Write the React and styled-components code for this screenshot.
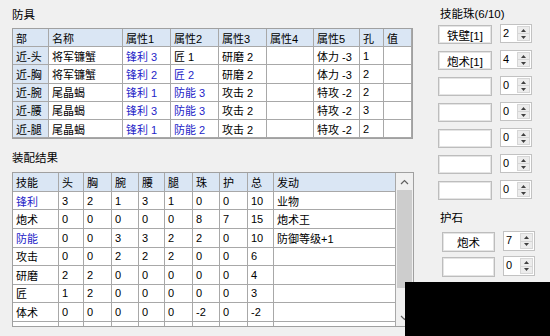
import styled, { createGlobalStyle } from 'styled-components';

const GlobalStyle = createGlobalStyle`
  html, body {
    margin: 0;
    padding: 0;
  }
  body {
    background: #f0f0f0;
    font-family: "Liberation Sans", "Noto Sans CJK SC", sans-serif;
    font-size: 11px;
    color: #000;
  }
`;

const Window = styled.div`
  position: relative;
  width: 550px;
  height: 336px;
  overflow: hidden;
  background: #f0f0f0;
  display: grid;
  grid-template-columns: 426px 1fr;
`;

const LeftPane = styled.div`
  padding: 8px 0 0 12px;
  display: flex;
  flex-direction: column;
`;

const RightPane = styled.div`
  padding: 7px 0 0 12px;
  display: flex;
  flex-direction: column;
`;

const GroupLabel = styled.div`
  font-size: 11.5px;
  line-height: 14px;
  height: 14px;
  padding-left: ${p => p.$indent || 0}px;
  margin: ${p => p.$top || 0}px 0 ${p => p.$bottom || 0}px;
  white-space: nowrap;
`;

const Table = styled.div`
  display: grid;
  grid-template-columns: ${p => p.$cols};
  grid-auto-rows: ${p => p.$row}px;
  background: #fff;
`;

const ArmorFrame = styled.div`
  width: 401px;
  box-sizing: border-box;
  border: 1px solid #a0a0a0;
`;

const Cell = styled.div`
  box-sizing: border-box;
  border-right: 1px solid #a8a8a8;
  border-bottom: 1px solid #a8a8a8;
  padding-left: 3px;
  display: flex;
  align-items: center;
  white-space: nowrap;
  overflow: hidden;
  background: ${p => (p.$head ? '#dae6f4' : '#fff')};
  color: ${p => (p.$blue ? '#2424c8' : '#000')};
`;

const ListBox = styled.div`
  width: 402px;
  height: 155px;
  box-sizing: border-box;
  border: 1px solid #a0a0a0;
  display: flex;
  background: #fff;
`;

const ListBody = styled.div`
  flex: 1;
  overflow: hidden;
`;

const ScrollBar = styled.div`
  width: 17px;
  display: flex;
  flex-direction: column;
  background: #f0f0f0;
`;

const ScrollButton = styled.div`
  height: 17px;
  display: flex;
  align-items: center;
  justify-content: center;
  color: #606060;
`;

const ScrollThumb = styled.div`
  height: 98px;
  margin: 0 1px;
  background: #cdcdcd;
`;

const ScrollTrack = styled.div`
  flex: 1;
`;

const SlotList = styled.div`
  display: flex;
  flex-direction: column;
  gap: ${p => p.$gap}px;
  padding-left: ${p => p.$indent || 0}px;
`;

const SlotRow = styled.div`
  display: flex;
  align-items: flex-start;
  gap: 8px;
  height: ${p => p.$h}px;
`;

const SkillBox = styled.div`
  width: ${p => p.$w}px;
  height: ${p => p.$h}px;
  box-sizing: border-box;
  border: 1px solid #bdbdbd;
  box-shadow: inset 0 0 0 1px #e4e4e4;
  background: #fff;
  display: flex;
  align-items: center;
  justify-content: center;
  white-space: nowrap;
  font-size: 11.5px;
`;

const Spinner = styled.div`
  width: 32px;
  height: ${p => p.$h}px;
  margin-top: -1px;
  box-sizing: border-box;
  border: 1px solid #c2c2c2;
  background: #fff;
  display: flex;
`;

const SpinValue = styled.div`
  flex: 1;
  padding: 2px 0 0 2px;
  line-height: 12px;
`;

const SpinButtons = styled.div`
  width: 13px;
  margin: 1px 1px 1px 0;
  display: flex;
  flex-direction: column;
  border: 1px solid #d6d6d6;
  box-sizing: border-box;
`;

const SpinArrow = styled.div`
  flex: 1;
  display: flex;
  align-items: center;
  justify-content: center;
  background: #ececec;
  & + & {
    border-top: 1px solid #d6d6d6;
  }
`;

const Blackout = styled.div`
  position: absolute;
  left: 405px;
  top: 282px;
  width: 145px;
  height: 54px;
  background: #000;
`;

const ARMOR_COLS = '36px 74px 48px 48px 48px 47px 46px 24px 28px';
const ARMOR_HEAD = ['部', '名称', '属性1', '属性2', '属性3', '属性4', '属性5', '孔', '值'];
const ARMOR = [
  ['近-头', '将军镰蟹', '锋利 3', '匠 1', '研磨 2', '', '体力 -3', '1', ''],
  ['近-胸', '将军镰蟹', '锋利 2', '匠 2', '研磨 2', '', '体力 -3', '2', ''],
  ['近-腕', '尾晶蝎', '锋利 1', '防能 3', '攻击 2', '', '特攻 -2', '2', ''],
  ['近-腰', '尾晶蝎', '锋利 3', '防能 3', '攻击 2', '', '特攻 -2', '3', ''],
  ['近-腿', '尾晶蝎', '锋利 1', '防能 2', '攻击 2', '', '特攻 -2', '2', ''],
];

const RESULT_COLS = '46px 25px 28px 27px 26px 28px 27px 28px 26px 122px';
const RESULT_HEAD = ['技能', '头', '胸', '腕', '腰', '腿', '珠', '护', '总', '发动'];
const RESULT = [
  ['锋利', '3', '2', '1', '3', '1', '0', '0', '10', '业物'],
  ['炮术', '0', '0', '0', '0', '0', '8', '7', '15', '炮术王'],
  ['防能', '0', '0', '3', '3', '2', '2', '0', '10', '防御等级+1'],
  ['攻击', '0', '0', '2', '2', '2', '0', '0', '6', ''],
  ['研磨', '2', '2', '0', '0', '0', '0', '0', '4', ''],
  ['匠', '1', '2', '0', '0', '0', '0', '0', '3', ''],
  ['体术', '0', '0', '0', '0', '0', '-2', '0', '-2', ''],
  ['体力', '-3', '-3', '0', '0', '0', '0', '0', '-6', ''],
];

const isBlue = text => text.startsWith('锋利') || text.startsWith('防能') || text === '匠 2';

const JEWELS = [
  ['铁壁[1]', '2'],
  ['炮术[1]', '4'],
  ['', '0'],
  ['', '0'],
  ['', '0'],
  ['', '0'],
  ['', '0'],
];

const STONES = [
  ['炮术', '7'],
  ['', '0'],
];

function Chevron({ down }) {
  return (
    <svg width="9" height="6" viewBox="0 0 9 6">
      <polyline
        points={down ? '1,1 4.5,4.5 8,1' : '1,5 4.5,1.5 8,5'}
        fill="none"
        stroke="currentColor"
        strokeWidth="1.2"
      />
    </svg>
  );
}

function Triangle({ down }) {
  return (
    <svg width="5" height="3" viewBox="0 0 5 3">
      <polygon points={down ? '0,0 5,0 2.5,3' : '0,3 5,3 2.5,0'} fill="#404040" />
    </svg>
  );
}

function Slot({ label, value, w, h }) {
  return (
    <SlotRow $h={h}>
      <SkillBox $w={w} $h={h}>{label}</SkillBox>
      <Spinner $h={h}>
        <SpinValue>{value}</SpinValue>
        <SpinButtons>
          <SpinArrow>
            <Triangle />
          </SpinArrow>
          <SpinArrow>
            <Triangle down />
          </SpinArrow>
        </SpinButtons>
      </Spinner>
    </SlotRow>
  );
}

export default function App() {
  return (
    <>
      <GlobalStyle />
      <Window>
        <LeftPane>
          <GroupLabel $bottom={6}>防具</GroupLabel>
          <ArmorFrame>
            <Table $cols={ARMOR_COLS} $row={18.2}>
              {ARMOR_HEAD.map(h => (
                <Cell key={h} $head>{h}</Cell>
              ))}
              {ARMOR.map(row =>
                row.map((text, i) => (
                  <Cell key={row[0] + i} $head={i === 0} $blue={isBlue(text)}>
                    {text}
                  </Cell>
                ))
              )}
            </Table>
          </ArmorFrame>

          <GroupLabel $top={12} $bottom={7}>装配结果</GroupLabel>
          <ListBox>
            <ListBody>
              <Table $cols={RESULT_COLS} $row={18.6}>
                {RESULT_HEAD.map(h => (
                  <Cell key={h} $head>{h}</Cell>
                ))}
                {RESULT.map(row =>
                  row.map((text, i) => (
                    <Cell key={row[0] + i} $blue={i === 0 && isBlue(text)}>
                      {text}
                    </Cell>
                  ))
                )}
              </Table>
            </ListBody>
            <ScrollBar>
              <ScrollButton>
                <Chevron />
              </ScrollButton>
              <ScrollThumb />
              <ScrollTrack />
              <ScrollButton>
                <Chevron down />
              </ScrollButton>
            </ScrollBar>
          </ListBox>
        </LeftPane>

        <RightPane>
          <GroupLabel $indent={2} $bottom={4}>技能珠(6/10)</GroupLabel>
          <SlotList $gap={7}>
            {JEWELS.map(([label, value], i) => (
              <Slot key={i} label={label} value={value} w={54} h={19} />
            ))}
          </SlotList>

          <GroupLabel $indent={2} $top={11} $bottom={7}>护石</GroupLabel>
          <SlotList $gap={5} $indent={4}>
            {STONES.map(([label, value], i) => (
              <Slot key={i} label={label} value={value} w={53} h={20} />
            ))}
          </SlotList>
        </RightPane>

        <Blackout />
      </Window>
    </>
  );
}
